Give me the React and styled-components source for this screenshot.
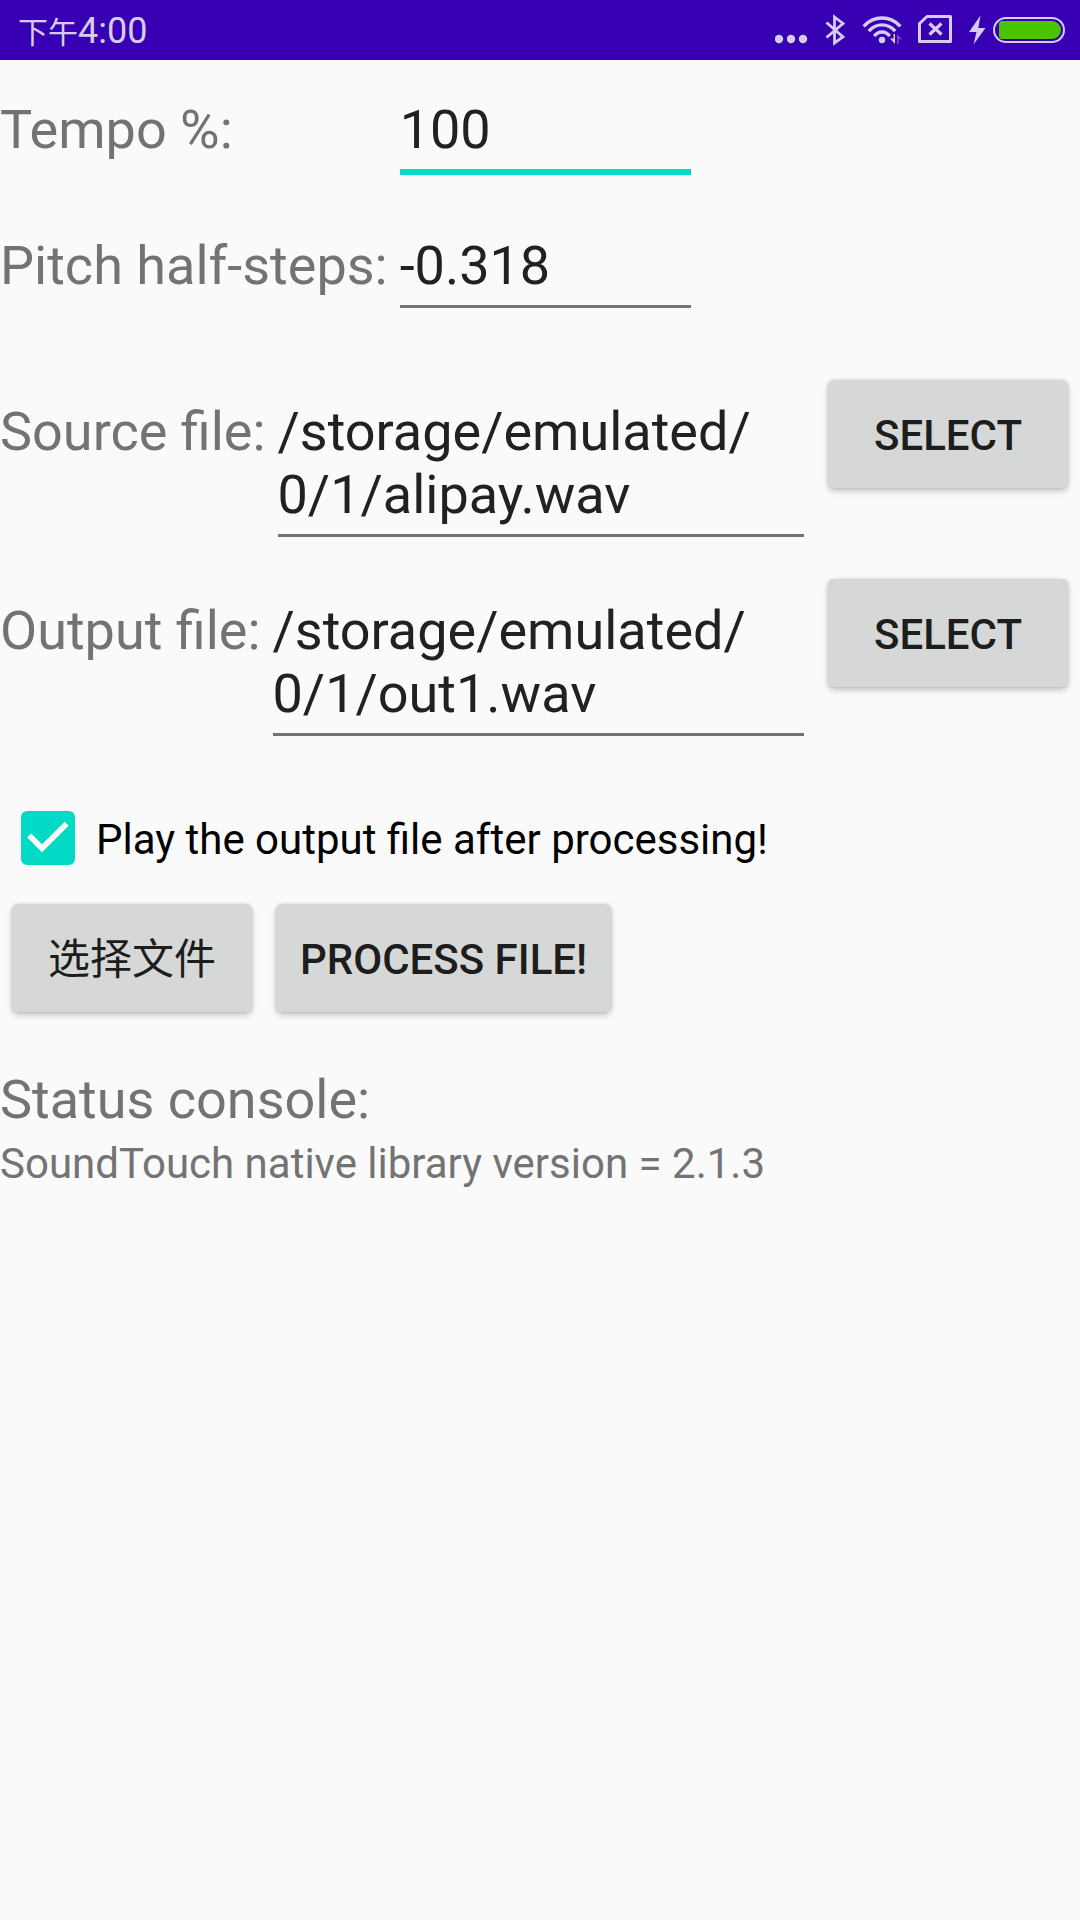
import React, { useState } from "react";
import styled, { createGlobalStyle, css } from "styled-components";

const GlobalStyle = createGlobalStyle`
  *, *::before, *::after { box-sizing: border-box; }
  body {
    margin: 0;
    background: #fafafa;
    font-family: Roboto, "Noto Sans CJK SC", sans-serif;
  }
`;

const Page = styled.div`
  min-height: 100vh;
  background: #fafafa;
`;

const StatusBar = styled.header`
  display: flex;
  align-items: center;
  justify-content: space-between;
  height: 60px;
  padding: 0 15px 0 18px;
  background: #3700b3;
  color: #d7ccf0;
`;

const Clock = styled.time`
  padding-top: 4px;
  font-size: 36px;
  line-height: 56px;
`;

const DayPart = styled.span`
  font-size: 30px;
`;

const StatusIcons = styled.div`
  display: flex;
  gap: 16px;
`;

const Icon = styled.svg`
  display: block;
  flex: none;
`;

const Form = styled.form`
  display: flex;
  flex-direction: column;
  padding-top: 38px;
`;

const NumberGrid = styled.div`
  display: grid;
  grid-template-columns: max-content 291px;
  column-gap: 12px;
  row-gap: 59px;
  align-items: start;
  margin-bottom: 72px;
`;

const FieldLabel = styled.label`
  color: #737373;
  font-size: 54px;
  line-height: 63px;
  white-space: nowrap;
`;

const fieldStyle = css`
  display: block;
  width: 100%;
  margin: 0;
  padding: 0 0 8px;
  border: 0;
  border-bottom: 3px solid #737373;
  border-radius: 0;
  outline: 0;
  background: transparent;
  color: #212121;
  font-family: inherit;
  font-size: 54px;
  line-height: 63px;
`;

const NumberInput = styled.input`
  ${fieldStyle}
  height: ${(p) => (p.$active ? 77 : 74)}px;
  border-bottom-width: ${(p) => (p.$active ? 6 : 3)}px;
  border-bottom-color: ${(p) => (p.$active ? "#03dac5" : "#737373")};
`;

const PathInput = styled.textarea`
  ${fieldStyle}
  height: 137px;
  overflow: hidden;
  resize: none;
`;

const FileList = styled.div`
  display: flex;
  flex-direction: column;
  gap: 42px;
  margin-bottom: 75px;
`;

const FileRow = styled.div`
  display: flex;
  align-items: flex-start;
  padding-right: 12px;
`;

const FileField = styled.div`
  display: grid;
  grid-template-columns: max-content 1fr;
  column-gap: 12px;
  flex: 1;
  min-width: 0;
  padding: 20px 24px 0 0;
`;

const Button = styled.button`
  flex: none;
  min-width: 240px;
  height: 108px;
  padding: 2px 24px 0;
  border: 0;
  border-radius: 6px;
  background: #d6d8d7;
  box-shadow: 0 3px 6px rgba(0, 0, 0, 0.22), 0 0 3px rgba(0, 0, 0, 0.12);
  color: #1d1d1d;
  font-family: inherit;
  font-size: 42px;
  font-weight: ${(p) => (p.$regular ? 400 : 500)};
  line-height: 49px;
  text-transform: uppercase;
`;

const CheckRow = styled.label`
  display: flex;
  align-items: flex-start;
  gap: 21px;
  margin-bottom: 35px;
  padding-left: 21px;
  color: #000;
  font-size: 42px;
  line-height: 58px;
`;

const CheckControl = styled.span`
  display: grid;
  height: 54px;
  > * { grid-area: 1 / 1; }
`;

const CheckInput = styled.input`
  width: 54px;
  height: 54px;
  margin: 0;
  border: 6px solid #737373;
  border-radius: 6px;
  appearance: none;
  &:checked {
    border-color: #03dac5;
    background: #03dac5;
  }
`;

const CheckMark = styled(Icon)`
  pointer-events: none;
`;

const Actions = styled.div`
  display: flex;
  gap: 24px;
  padding: 0 12px;
  margin-bottom: 56px;
`;

const Console = styled.section`
  display: flex;
  flex-direction: column;
  gap: 8px;
  color: #737373;
`;

const ConsoleTitle = styled.h2`
  margin: 0;
  font-size: 54px;
  font-weight: 400;
  line-height: 63px;
`;

const ConsoleText = styled.output`
  font-size: 42px;
  line-height: 49px;
`;

function StatusBarIcons() {
  return (
    <StatusIcons aria-hidden="true">
      <Icon width="34" height="60" viewBox="775 0 34 60" fill="currentColor">
        <circle cx="779" cy="39" r="4.2" />
        <circle cx="791" cy="39" r="4.2" />
        <circle cx="803" cy="39" r="4.2" />
      </Icon>
      <Icon width="21" height="60" viewBox="825 0 21 60" fill="none" stroke="currentColor" strokeWidth="2.8">
        <path d="M826.5 22.5 L843 37 L834.5 43 V17 L843 23.5 L826.5 37.5" />
      </Icon>
      <Icon width="40" height="60" viewBox="862 0 40 60" fill="none" stroke="currentColor" strokeWidth="3.4">
        <path d="M863.7 26.3 C873.5 15.2 890.5 15.2 900.3 26.3" />
        <path d="M868.8 31.2 C876 22.8 888 22.8 895.2 31.2" />
        <path d="M874.2 36 C878.6 30.6 885.4 30.6 889.8 36" />
        <circle cx="882" cy="40" r="3.2" fill="currentColor" stroke="none" />
        <path d="M893.6 34 H895 V44 L890 38.6 H893.6 Z" fill="currentColor" stroke="none" />
        <path d="M897 44 V34 L902 39.2 H898.8 V44 Z" fill="currentColor" opacity="0.35" stroke="none" />
      </Icon>
      <Icon width="34" height="60" viewBox="918 0 34 60" fill="none" stroke="currentColor">
        <path d="M927 16.5 H950.5 V41.5 H919.5 V23.5 Z" strokeWidth="3" strokeLinejoin="round" />
        <path d="M929.5 23.5 L941.5 34.5 M941.5 23.5 L929.5 34.5" strokeWidth="3.2" />
      </Icon>
      <Icon width="97" height="60" viewBox="968 0 97 60">
        <path d="M980.5 15.5 L969 32 H976.5 L973.5 44.5 L985.5 28 H978.3 Z" fill="currentColor" />
        <rect x="994" y="18" width="70" height="24" rx="12" fill="none" stroke="currentColor" strokeWidth="2" />
        <path d="M999 24 Q999 21 1002 21 H1052 A9 9 0 0 1 1052 39 H1002 Q999 39 999 36 Z" fill="#49c400" />
      </Icon>
    </StatusIcons>
  );
}

function FilePicker({ id, label, value, onChange }) {
  return (
    <FileRow>
      <FileField>
        <FieldLabel htmlFor={id}>{label}</FieldLabel>
        <PathInput
          id={id}
          rows={2}
          spellCheck={false}
          value={value}
          onChange={(e) => onChange(e.target.value)}
        />
      </FileField>
      <Button type="button">Select</Button>
    </FileRow>
  );
}

export default function App() {
  const [tempo, setTempo] = useState("100");
  const [pitch, setPitch] = useState("-0.318");
  // The zero-width space lets the path wrap after a folder name.
  const [source, setSource] = useState("/storage/emulated/\u200b0/1/alipay.wav");
  const [output, setOutput] = useState("/storage/emulated/\u200b0/1/out1.wav");
  const [play, setPlay] = useState(true);

  return (
    <Page>
      <GlobalStyle />
      <StatusBar>
        <Clock dateTime="16:00">
          <DayPart>下午</DayPart>4:00
        </Clock>
        <StatusBarIcons />
      </StatusBar>
      <Form onSubmit={(e) => e.preventDefault()}>
        <NumberGrid>
          <FieldLabel htmlFor="tempo">Tempo %:</FieldLabel>
          <NumberInput
            id="tempo"
            inputMode="decimal"
            $active
            value={tempo}
            onChange={(e) => setTempo(e.target.value)}
          />
          <FieldLabel htmlFor="pitch">Pitch half-steps:</FieldLabel>
          <NumberInput
            id="pitch"
            inputMode="decimal"
            value={pitch}
            onChange={(e) => setPitch(e.target.value)}
          />
        </NumberGrid>
        <FileList>
          <FilePicker id="source" label="Source file:" value={source} onChange={setSource} />
          <FilePicker id="output" label="Output file:" value={output} onChange={setOutput} />
        </FileList>
        <CheckRow>
          <CheckControl>
            <CheckInput type="checkbox" checked={play} onChange={(e) => setPlay(e.target.checked)} />
            {play && (
              <CheckMark width="54" height="54" viewBox="0 0 54 54" fill="none" stroke="#fafafa" strokeWidth="5.6" aria-hidden="true">
                <path d="M8.2 24.5 L21 37.3 L45.7 12.7" />
              </CheckMark>
            )}
          </CheckControl>
          Play the output file after processing!
        </CheckRow>
        <Actions>
          <Button type="button" $regular>选择文件</Button>
          <Button type="submit">Process file!</Button>
        </Actions>
        <Console>
          <ConsoleTitle>Status console:</ConsoleTitle>
          <ConsoleText>SoundTouch native library version = 2.1.3</ConsoleText>
        </Console>
      </Form>
    </Page>
  );
}
